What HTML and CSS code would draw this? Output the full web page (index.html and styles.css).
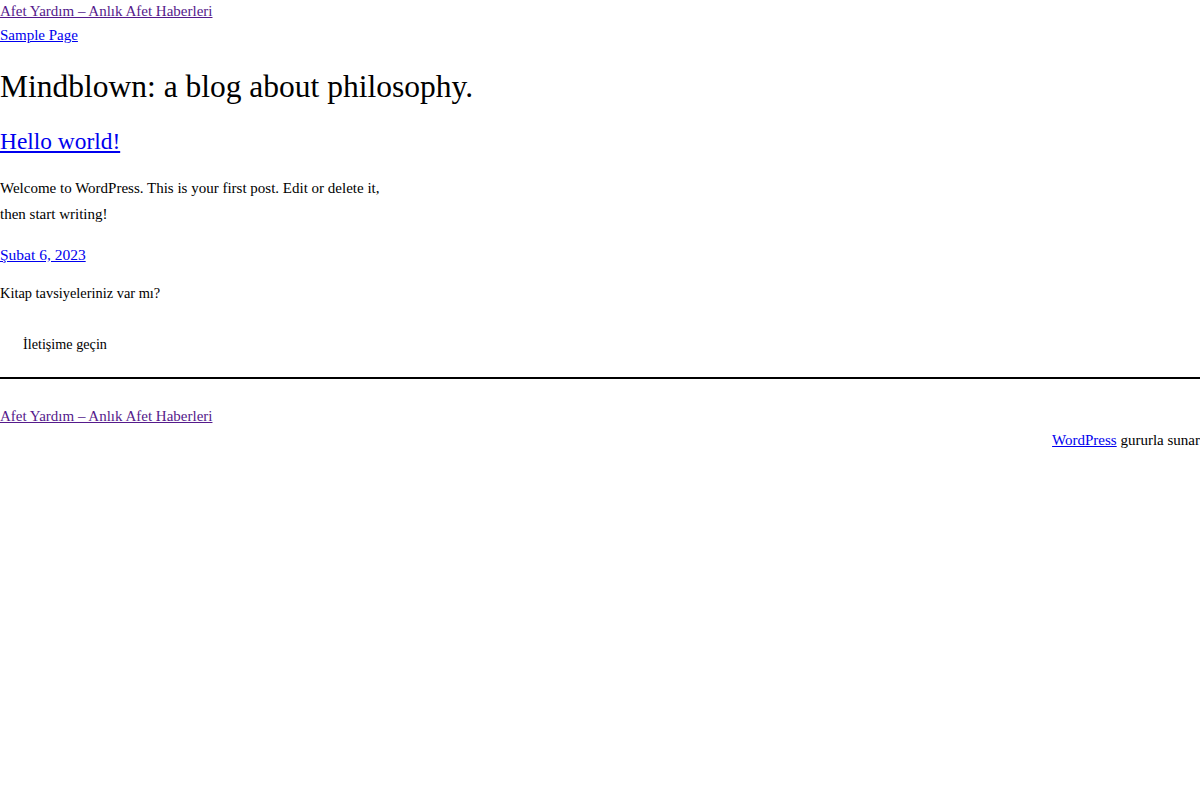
FILE: index.html
```html
<!DOCTYPE html>
<html lang="tr">
<head>
<meta charset="utf-8">
<title>Afet Yardım – Anlık Afet Haberleri</title>
<link rel="stylesheet" href="styles.css">
</head>
<body>
<header class="site-header">
  <p class="site-title"><a class="visited" href="#">Afet Yardım – Anlık Afet Haberleri</a></p>
  <nav class="site-nav"><a href="#">Sample Page</a></nav>
</header>
<main class="site-main">
  <h1 class="page-title">Mindblown: a blog about philosophy.</h1>
  <article class="post">
    <h2 class="post-title"><a href="#">Hello world!</a></h2>
    <p class="post-excerpt">Welcome to WordPress. This is your first post. Edit or delete it, then start writing!</p>
    <p class="post-date"><a href="#">Şubat 6, 2023</a></p>
  </article>
  <p class="cta-question">Kitap tavsiyeleriniz var mı?</p>
  <div class="cta-button">İletişime geçin</div>
</main>
<footer class="site-footer">
  <p class="footer-title"><a class="visited" href="#">Afet Yardım – Anlık Afet Haberleri</a></p>
  <p class="credit"><a href="#">WordPress</a> gururla sunar</p>
</footer>
</body>
</html>
```
FILE: styles.css
```css
html, body {
  margin: 0;
  padding: 0;
  background: #fff;
}
body {
  font-family: "Liberation Serif", "Times New Roman", serif;
  font-size: 15px;
  color: #000;
}
a { color: #0000ee; }
a.visited { color: #551a8b; }
p { margin: 0; }

.site-title { line-height: 22px; font-size: 15px; }
.site-nav { line-height: 26px; font-size: 15px; }

.page-title {
  margin: 20px 0 0;
  font-size: 31.5px;
  font-weight: normal;
  line-height: 38px;
}
.post-title {
  margin: 21px 0 0;
  font-size: 23.4px;
  font-weight: normal;
  line-height: 28px;
}
.post-excerpt {
  margin-top: 20px;
  max-width: 390px;
  line-height: 26px;
  font-size: 15px;
}
.post-date {
  margin-top: 18px;
  line-height: 20px;
  font-size: 15.5px;
}
.cta-question {
  margin-top: 18px;
  line-height: 20px;
  font-size: 14.4px;
}
.cta-button {
  margin-top: 31px;
  padding: 0 23px;
  line-height: 20px;
  font-size: 14.2px;
}
.site-footer {
  margin-top: 23px;
  border-top: 2px solid #000;
  padding-top: 27px;
}
.footer-title { line-height: 20px; font-size: 15px; }
.credit { text-align: right; line-height: 28px; font-size: 15px; }
```
